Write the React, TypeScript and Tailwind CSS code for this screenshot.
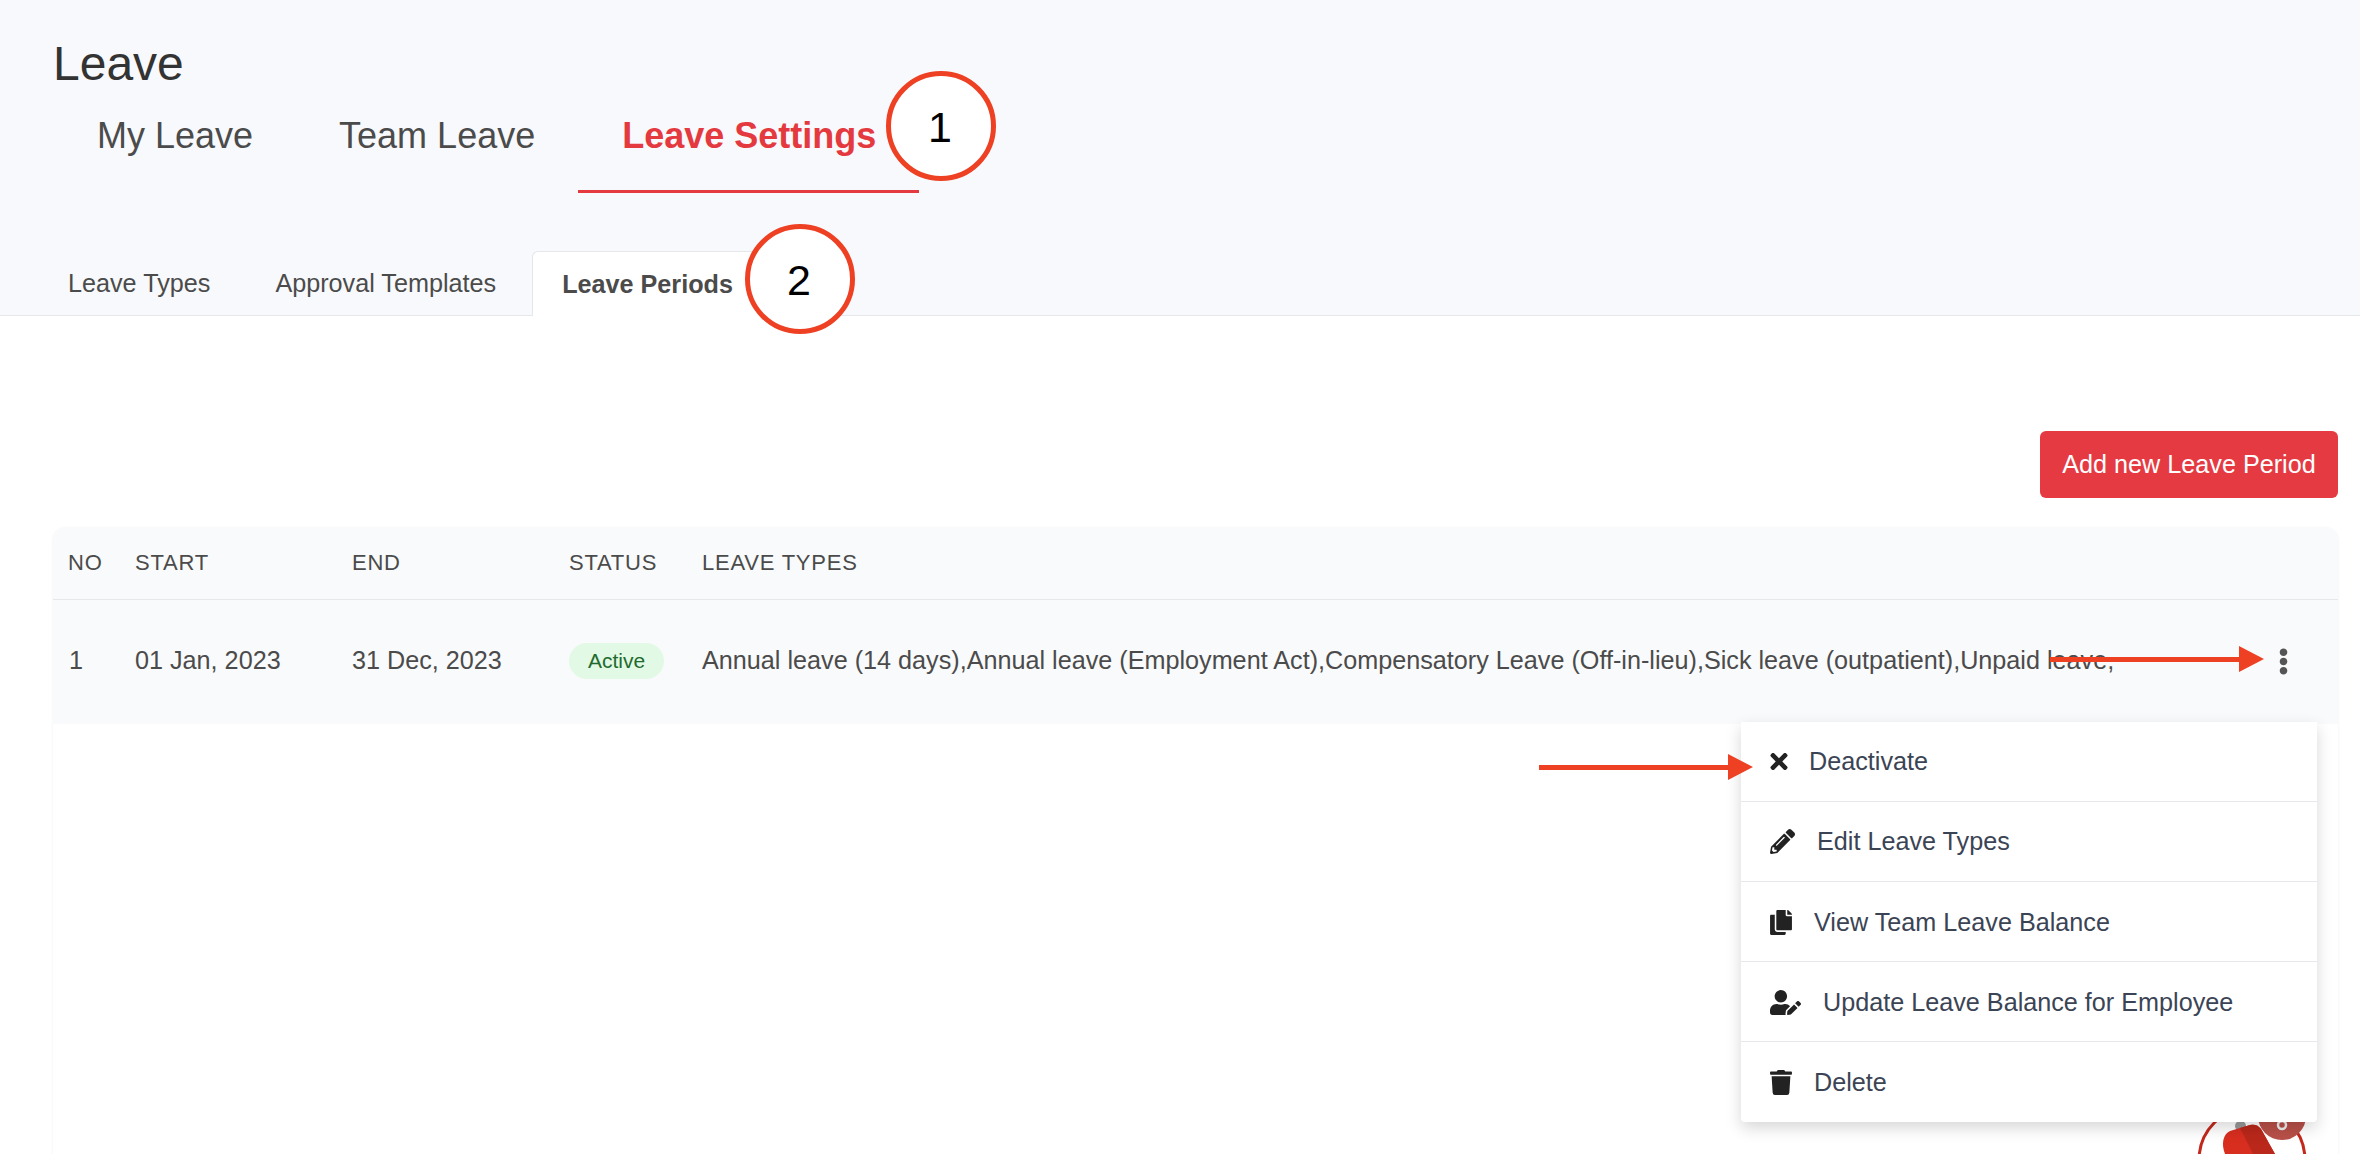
import { FaTimes, FaPencilAlt, FaCopy, FaUserEdit, FaTrash, FaEllipsisV } from "react-icons/fa";

const menu = [
  { icon: <FaTimes className="w-[18px] h-[25px]" />, label: "Deactivate", gap: "w-[39px]", shift: "" },
  { icon: <FaPencilAlt className="w-[25px] h-[25px]" />, label: "Edit Leave Types", gap: "w-[47px]", shift: "" },
  { icon: <FaCopy className="w-[22px] h-[25px]" />, label: "View Team Leave Balance", gap: "w-[44px]", shift: "pt-[2px]" },
  { icon: <FaUserEdit className="w-[31px] h-[25px]" />, label: "Update Leave Balance for Employee", gap: "w-[53px]", shift: "pt-[2px]" },
  { icon: <FaTrash className="w-[22px] h-[25px]" />, label: "Delete", gap: "w-[44px]", shift: "pt-[1px]" },
];

function Circle({ n, pos }: { n: string; pos: string }) {
  return (
    <div className={`absolute ${pos} w-[110px] h-[110px] rounded-full bg-white border-[5px] border-[#ee4023] flex items-center justify-center pt-[3px] pr-[2px] text-[43px] text-black`}>
      {n}
    </div>
  );
}

function Arrow({ pos, w }: { pos: string; w: string }) {
  return (
    <div className={`absolute ${pos} flex items-center`}>
      <div className={`${w} h-[5px] bg-[#ee4023]`} />
      <svg width="25" height="26" viewBox="0 0 25 26"><polygon points="0,0 25,13 0,26" fill="#ee4023" /></svg>
    </div>
  );
}

export default function App() {
  return (
    <div className="relative w-[2360px] h-[1154px] overflow-hidden bg-white font-['Liberation_Sans',Arial,sans-serif] text-[#4b4b4b]">
      <header className="h-[316px] bg-[#f8f9fc] border-b border-[#e5e7eb] pl-[53px] pt-[36px] flex flex-col">
        <h1 className="text-[48px] leading-[56px] text-[#333] font-normal">Leave</h1>
        <nav className="flex text-[36px] leading-[42px] mt-[1px]">
          <div className="px-[44px] pt-[22px] pb-[33px]">My Leave</div>
          <div className="pl-[42px] pr-[43px] pt-[22px] pb-[33px]">Team Leave</div>
          <div className="pl-[44px] pr-[43px] pt-[22px] pb-[33px] font-bold text-[#e53940] border-b-[3px] border-[#e53940]">Leave Settings</div>
        </nav>
        <div className="flex text-[25.2px] leading-[30px] mt-[58px] -ml-[1px]">
          <div className="pl-[16px] pr-[32px] py-[17px]">Leave Types</div>
          <div className="pl-[33px] pr-[36px] py-[17px]">Approval Templates</div>
          <div className="pl-[29px] pr-[30px] py-[17px] font-bold bg-white border-l border-t border-[#e5e7eb] rounded-tl-[6px] w-[240px] -mb-px">Leave Periods</div>
        </div>
      </header>

      <main className="pr-[22px] pl-[53px]">
        <div className="flex justify-end pt-[115px]">
          <button className="w-[298px] h-[67px] rounded-[6px] bg-[#e53a42] text-white text-[25.2px]">Add new Leave Period</button>
        </div>
        <div className="relative mt-[29px] h-[640px] rounded-[12px] bg-white shadow-[0_1px_3px_rgba(0,0,0,0.06)] overflow-hidden">
          <div className="flex items-center h-[73px] pb-[1px] bg-[#f9fafb] border-b border-[#e5e7eb] text-[22px] uppercase tracking-[0.035em]">
            <div className="w-[82px] pl-[15px]">No</div>
            <div className="w-[217px]">Start</div>
            <div className="w-[217px]">End</div>
            <div className="w-[133px]">Status</div>
            <div>Leave Types</div>
          </div>
          <div className="flex items-center h-[124px] pb-[2px] bg-[#f9fafb] text-[25.2px]">
            <div className="w-[82px] pl-[16px]">1</div>
            <div className="w-[217px]">01 Jan, 2023</div>
            <div className="w-[217px]">31 Dec, 2023</div>
            <div className="w-[133px]">
              <span className="flex items-center justify-center w-[95px] h-[36px] rounded-full bg-[#e2f9e5] text-[#1f6b2e] text-[21px]">Active</span>
            </div>
            <div className="flex-1 whitespace-nowrap">Annual leave (14 days),Annual leave (Employment Act),Compensatory Leave (Off-in-lieu),Sick leave (outpatient),Unpaid leave,</div>
            <div className="w-[68px] text-[#555]"><FaEllipsisV size={27} /></div>
          </div>
        </div>
      </main>

      <svg className="absolute left-[2190px] top-[1100px]" width="130" height="54" viewBox="0 0 130 54">
        <circle cx="62" cy="60" r="53" fill="none" stroke="#c3281c" strokeWidth="3" />
        <circle cx="92" cy="16" r="24" fill="#b85048" />
        <circle cx="92" cy="25" r="4" fill="none" stroke="#eee" strokeWidth="2.5" />
        <rect x="45" y="21" width="11" height="10" rx="5" fill="#999" />
        <path d="M35 54 C31 44 33 34 40 31 L60 25 C65 24 68 25 71 29 L85 54 Z" fill="#d82e20" />
        <path d="M50 28 L60 25 C65 24 68 25 71 29 L85 54 L63 54 Z" fill="#b9281a" />
      </svg>

      <ul className="absolute left-[1741px] top-[722px] w-[576px] h-[400px] bg-white rounded-b-[4px] shadow-[0_6px_16px_rgba(0,0,0,0.16)] text-[25.2px] text-[#3b4454]">
        {menu.map((m, i) => (
          <li key={m.label} className={`flex items-center h-[80px] pl-[29px] ${m.shift} ${i < 4 ? "border-b border-[#e5e7eb]" : ""}`}>
            <span className={`${m.gap} flex text-[#222]`}>{m.icon}</span>
            <span>{m.label}</span>
          </li>
        ))}
      </ul>

      <Arrow pos="left-[2050px] top-[646px]" w="w-[189px]" />
      <Arrow pos="left-[1539px] top-[754px]" w="w-[189px]" />
      <Circle n="1" pos="left-[886px] top-[71px]" />
      <Circle n="2" pos="left-[745px] top-[224px]" />
    </div>
  );
}
